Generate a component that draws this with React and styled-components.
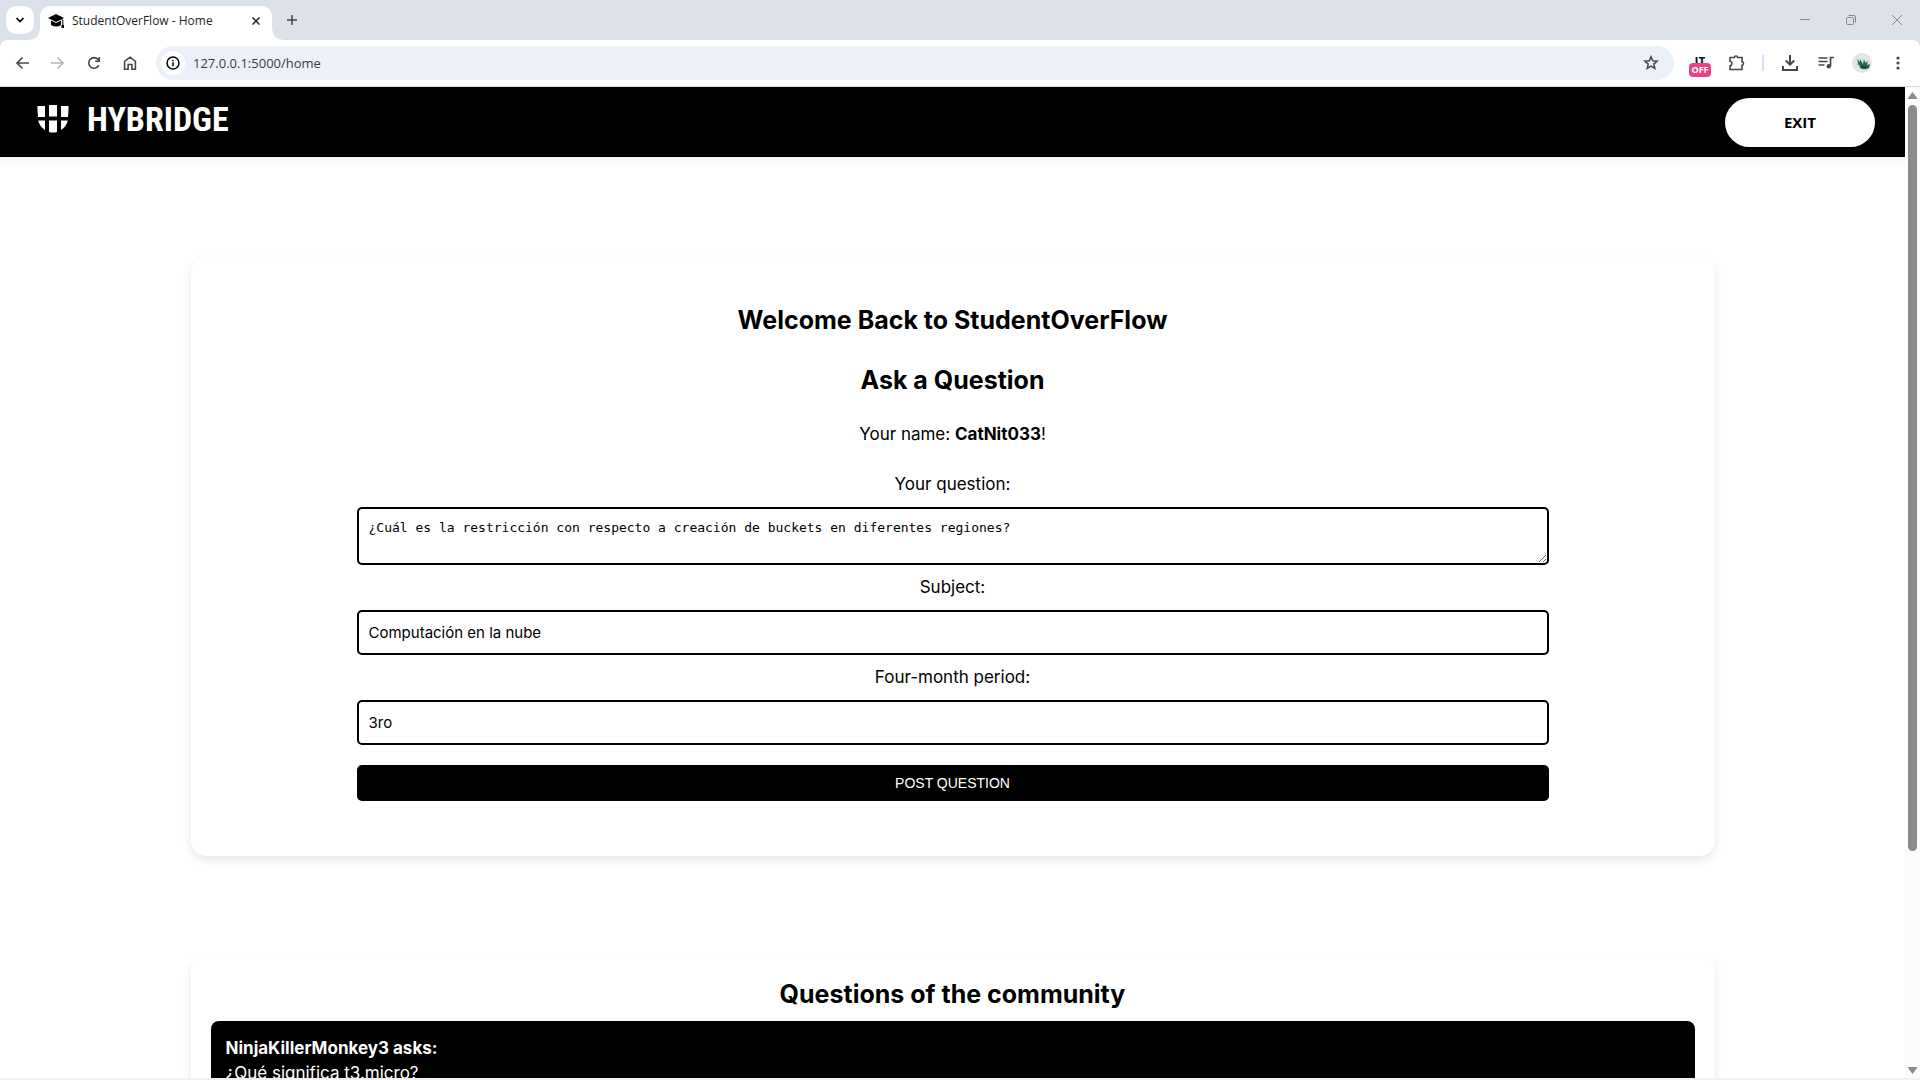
import React from "react";
import styled, { createGlobalStyle, css } from "styled-components";

const ui = `"Open Sans", "Noto Sans", sans-serif`;
const body = `Inter, "Noto Sans", sans-serif`;

const GlobalStyle = createGlobalStyle`
  *, *::before, *::after { box-sizing: border-box; }
  body { margin: 0; background: #fff; color: #000; font-family: ${body}; }
  h1, h2, p { margin: 0; }
  button, input, textarea { font-family: inherit; }
`;

const Browser = styled.div`
  display: flex;
  flex-direction: column;
  height: 100vh;
  overflow: hidden;
`;

const center = css`
  display: flex;
  align-items: center;
  justify-content: center;
`;

const TabStrip = styled.div`
  display: flex;
  align-items: flex-start;
  height: 40px;
  padding-left: 6px;
  background: #dde1e9;
  flex: none;
`;

const TabSearch = styled.button`
  ${center}
  width: 28px;
  height: 28px;
  margin: 6px 6px 0 0;
  padding: 0;
  border: 0;
  border-radius: 10px;
  background: #fff;
`;

const Tab = styled.div`
  position: relative;
  display: flex;
  align-items: center;
  gap: 8px;
  width: 232px;
  height: 34px;
  margin-top: 6px;
  padding: 0 8px 4px;
  border-radius: 10px 10px 0 0;
  background: #fff;
  font: 12px/16px ${ui};
  color: #1f1f1f;

  &::before, &::after {
    content: "";
    position: absolute;
    bottom: 0;
    width: 10px;
    height: 10px;
  }
  &::before {
    right: 100%;
    background: radial-gradient(circle at 0 0, transparent 9px, #fff 10px);
  }
  &::after {
    left: 100%;
    background: radial-gradient(circle at 100% 0, transparent 9px, #fff 10px);
  }
`;

const TabTitle = styled.span`
  flex: 1;
  white-space: nowrap;
`;

const IconButton = styled.button`
  ${center}
  flex: none;
  width: ${(p) => p.$w || 36}px;
  height: ${(p) => p.$h || 36}px;
  padding: 0;
  border: 0;
  background: none;
  color: ${(p) => p.$color || "#474747"};
`;

const NewTab = styled(IconButton)`
  margin: 6px auto 0 6px;
`;

const ToolbarBack = styled.div`
  flex: none;
  background: #dde1e9;
`;

const Toolbar = styled.div`
  display: flex;
  align-items: center;
  height: 47px;
  padding: 0 4px;
  border-bottom: 1px solid #dcdde0;
  border-radius: 8px 8px 0 0;
  background: #fff;
`;

const Address = styled.div`
  display: flex;
  align-items: center;
  flex: 1;
  height: 34px;
  margin: 0 8px;
  padding: 0 5px;
  border-radius: 17px;
  background: #ecf0f9;
`;

const SiteInfo = styled.button`
  ${center}
  width: 24px;
  height: 24px;
  margin-right: 8px;
  padding: 0;
  border: 0;
  border-radius: 50%;
  background: #fff;
`;

const AddressInput = styled.input`
  flex: 1;
  border: 0;
  padding: 0;
  outline: 0;
  background: none;
  color: #3a3c40;
  font: 13px/20px ${ui};
`;

const Divider = styled.span`
  width: 2px;
  height: 16px;
  margin: 0 8px;
  background: #d3e0f8;
`;

const Extension = styled.button`
  display: flex;
  flex-direction: column;
  align-items: center;
  justify-content: flex-end;
  width: 36px;
  height: 28px;
  padding: 0;
  border: 0;
  background: none;
  color: #111;
  font: bold 12px/14px ${ui};
`;

const ExtensionMark = styled.span`
  height: 8px;
  overflow: hidden;
  line-height: 14px;
`;

const Badge = styled.span`
  flex: none;
  width: 22px;
  height: 14px;
  border-radius: 4px;
  background: #e8438a;
  color: #fff;
  font: bold 9px/14px ${ui};
  text-align: center;
`;

const Viewport = styled.div`
  display: flex;
  flex: 1;
  min-height: 0;
  overflow: hidden;
  border-bottom: 2px solid #f1f1f1;
`;

const Page = styled.div`
  flex: 1;
  min-width: 0;
  overflow: hidden;
`;

const ScrollTrack = styled.div`
  display: flex;
  flex-direction: column;
  align-items: center;
  justify-content: space-between;
  width: 15px;
  padding: 5px 0 4px;
  background: #fcfcfc;
`;

const ScrollThumb = styled.div`
  width: 9px;
  height: 76%;
  margin: 6px 0 auto;
  border-radius: 5px;
  background: #8b8b8b;
`;

const Header = styled.header`
  display: flex;
  align-items: center;
  justify-content: space-between;
  height: 70px;
  padding: 0 30px 0 37px;
  background: #000;
  box-shadow: 0 4px 8px rgba(0, 0, 0, 0.05);
`;

const Logo = styled.a`
  display: flex;
  align-items: center;
  gap: 18px;
  padding-bottom: 6px;
  color: #fff;
  text-decoration: none;
  font: bold 34px/36px "Liberation Sans Narrow", "Roboto Condensed", "Liberation Sans", sans-serif;
`;

const ExitButton = styled.button`
  width: 150px;
  height: 49px;
  border: 0;
  border-radius: 25px;
  background: #fff;
  color: #000;
  font: 700 15px/24px "Open Sans", sans-serif;
`;

const Card = styled.section`
  width: 80%;
  margin: 100px auto 0;
  padding: ${(p) => p.$padding};
  border-radius: 15px;
  background: #fff;
  box-shadow: 0 4px 8px rgba(0, 0, 0, 0.1);
`;

const Title = styled.h2`
  font-size: 25px;
  line-height: 37px;
  font-weight: 700;
  text-align: center;
  margin-bottom: ${(p) => p.$gap}px;
`;

const Text = styled.p`
  font-size: 17px;
  line-height: 25px;
`;

const Greeting = styled(Text)`
  margin-bottom: 15px;
`;

const Form = styled.form`
  display: flex;
  flex-direction: column;
  text-align: center;
`;

const Label = styled.label`
  margin: 10px 0;
  font-size: 17px;
  line-height: 25px;
`;

const field = css`
  width: 100%;
  border: 2px solid #000;
  border-radius: 5px;
  padding: 10px;
  outline: 0;
  background: #fff;
  color: #000;
`;

const TextArea = styled.textarea`
  ${field}
  display: block;
  height: 58px;
  resize: vertical;
  font: 13px/18px "DejaVu Sans Mono", monospace;
`;

const TextInput = styled.input`
  ${field}
  height: 45px;
  font-size: 15px;
`;

const Submit = styled.button`
  height: 36px;
  margin-top: 20px;
  border: 0;
  border-radius: 5px;
  background: #000;
  color: #fff;
  font: 14px/20px "Liberation Sans", Arial, sans-serif;
`;

const Question = styled.article`
  padding: 15px;
  border-radius: 8px;
  background: #000;
  color: #fff;
`;

const Svg = ({ size = 20, children, sw = 2, ...rest }) => (
  <svg width={size} height={size} viewBox={`0 0 ${size} ${size}`} fill="none" stroke="currentColor" strokeWidth={sw} aria-hidden="true" {...rest}>
    {children}
  </svg>
);

const Shield = () => (
  <svg width="32" height="28" viewBox="0 0 32 28" fill="#fff" aria-hidden="true">
    <path d="M.5 1H8v11H1Q.3 6 .5 1ZM12 0h8v11.500h-8ZM24 1h7.500Q31.700 6 31 12h-7ZM1.200 15.500H8v9.500Q2.500 21.500 1.200 15.500ZM12 15.500h8V27q-4 1-8 0ZM24 15.500h6.800Q29.500 21.500 24 25Z" />
  </svg>
);

export default function App() {
  return (
    <>
      <GlobalStyle />
      <Browser>
        <TabStrip>
          <TabSearch aria-label="Search tabs">
            <Svg size={10} sw={1.7}><path d="M1.500 3 5 6.500 8.500 3" /></Svg>
          </TabSearch>
          <Tab>
            <svg width="16" height="16" viewBox="0 0 16 16" aria-hidden="true">
              <path d="M0 5 8 1l8 4-8 4ZM3 7.500 8 10l5-2.500V12q-5 3-10 0Z" />
              <path d="M8 5q6 0 6.800 2v6" fill="none" stroke="#000" />
              <path d="M13.500 12h2.500v3h-2.500z" />
            </svg>
            <TabTitle>StudentOverFlow - Home</TabTitle>
            <IconButton $w={16} $h={16} $color="#1f1f1f" aria-label="Close tab">
              <Svg size={8} sw={1.5}><path d="m.5.5 7 7m0-7-7 7" /></Svg>
            </IconButton>
          </Tab>
          <NewTab $w={28} $h={28} aria-label="New tab">
            <Svg size={10} sw={1.5}><path d="M5 0v10M0 5h10" /></Svg>
          </NewTab>
          <IconButton $w={46} $h={40} $color="#85888e" aria-label="Minimize">
            <Svg size={10} sw={1}><path d="M0 4.500h10" /></Svg>
          </IconButton>
          <IconButton $w={46} $h={40} $color="#85888e" aria-label="Restore">
            <Svg size={10} sw={1}><rect x=".5" y="2.500" width="7" height="7" rx="1" /><path d="M2.500.5H8q1.500 0 1.500 1.500v5.500" /></Svg>
          </IconButton>
          <IconButton $w={46} $h={40} $color="#85888e" aria-label="Close window">
            <Svg size={10} sw={1}><path d="m0 0 10 10m0-10L0 10" /></Svg>
          </IconButton>
        </TabStrip>

        <ToolbarBack>
          <Toolbar>
            <IconButton aria-label="Back">
              <Svg size={14} sw={1.6}><path d="M14 7H2m5.500-5.500L2 7l5.500 5.500" /></Svg>
            </IconButton>
            <IconButton $color="#b4b5b7" aria-label="Forward">
              <Svg size={14} sw={1.6}><path d="M0 7h12M6.500 1.500 12 7l-5.500 5.500" /></Svg>
            </IconButton>
            <IconButton aria-label="Reload">
              <Svg size={14} sw={1.6}><path d="M11.800 9.200A5.300 5.300 0 1 1 11 3.400l1.200 1.400M12.300 1v4.200H8.200" /></Svg>
            </IconButton>
            <IconButton aria-label="Home">
              <Svg size={14} sw={1.6}><path d="M1.600 13.200V5.300L7 1.200l5.400 4.100v7.900H8.900V8.500H5.100v4.700Z" /></Svg>
            </IconButton>
            <Address>
              <SiteInfo type="button" aria-label="Site information">
                <Svg size={14} sw={1.5}><circle cx="7" cy="7" r="6" /><path d="M7 6.200v4M7 3.700v1.500" /></Svg>
              </SiteInfo>
              <AddressInput aria-label="Address" defaultValue="127.0.0.1:5000/home" />
              <IconButton aria-label="Bookmark">
                <Svg size={16} sw={1.5}><path d="m8 1.800 1.700 4 4.400.4-3.300 2.900 1 4.300L8 11.100l-3.800 2.300 1-4.300-3.300-2.900 4.400-.4Z" /></Svg>
              </IconButton>
            </Address>
            <Extension>
              <ExtensionMark>JT</ExtensionMark>
              <Badge>OFF</Badge>
            </Extension>
            <IconButton aria-label="Extensions">
              <Svg size={18} sw={1.6}><path d="M3 3.500h4.300q.2-1.500 1.700-1.500t1.700 1.500H15v4.300q1.500.2 1.500 1.700T15 11.200v4.300H3v-3.700q2-.4 2-2.300T3 7.200Z" /></Svg>
            </IconButton>
            <Divider />
            <IconButton aria-label="Downloads">
              <Svg size={18}><path d="M9 1v9M4.800 6.500 9 10.700l4.200-4.200M2 12v4h14v-4" /></Svg>
            </IconButton>
            <IconButton aria-label="Media controls">
              <Svg size={16} sw={1.7}><path d="M.5 3h9M.5 6.500h9M.5 10h6M12.500 11V2.500H16" /><circle cx="10.800" cy="11.300" r="2.200" fill="currentColor" stroke="none" /></Svg>
            </IconButton>
            <IconButton aria-label="Profile">
              <svg width="20" height="20" viewBox="0 0 20 20" aria-hidden="true">
                <circle cx="10" cy="10" r="10" fill="#e3e5e4" />
                <path d="m5 6 3 3v-3l3 5 1-5 1.500 4L16 8l-1 4 3-1-1 4q-5 2.500-9 0l-1-3.500-1.500.5.5-2Z" fill="#236b50" />
                <path d="m9 12 4 2 3-2-2 3h-4Z" fill="#12432f" />
              </svg>
            </IconButton>
            <IconButton aria-label="Browser menu">
              <svg width="4" height="14" viewBox="0 0 4 14" fill="#474747" aria-hidden="true"><circle cx="2" cy="2" r="1.600" /><circle cx="2" cy="7" r="1.600" /><circle cx="2" cy="12" r="1.600" /></svg>
            </IconButton>
          </Toolbar>
        </ToolbarBack>

        <Viewport>
          <Page>
            <Header>
              <Logo href="#home"><Shield />HYBRIDGE</Logo>
              <ExitButton type="button">EXIT</ExitButton>
            </Header>
            <main>
              <Card $padding="45px 166px 55px">
                <Title $gap={23}>Welcome Back to StudentOverFlow</Title>
                <Title $gap={23}>Ask a Question</Title>
                <Form onSubmit={(e) => e.preventDefault()}>
                  <Greeting>Your name: <strong>CatNit033</strong>!</Greeting>
                  <Label htmlFor="question">Your question:</Label>
                  <TextArea id="question" rows="2" defaultValue="¿Cuál es la restricción con respecto a creación de buckets en diferentes regiones?" />
                  <Label htmlFor="subject">Subject:</Label>
                  <TextInput id="subject" defaultValue="Computación en la nube" />
                  <Label htmlFor="period">Four-month period:</Label>
                  <TextInput id="period" defaultValue="3ro" />
                  <Submit type="submit">POST QUESTION</Submit>
                </Form>
              </Card>
              <Card $padding="20px">
                <Title $gap={8}>Questions of the community</Title>
                <Question>
                  <Text><strong>NinjaKillerMonkey3 asks:</strong></Text>
                  <Text>¿Qué significa t3.micro?</Text>
                </Question>
              </Card>
            </main>
          </Page>
          <ScrollTrack aria-hidden="true">
            <svg width="9" height="7" viewBox="0 0 9 7" fill="#8b8b8b"><path d="M4.500 0 9 6v1H0V6Z" /></svg>
            <ScrollThumb />
            <svg width="9" height="7" viewBox="0 0 9 7" fill="#8b8b8b"><path d="M4.500 7 9 1V0H0v1Z" /></svg>
          </ScrollTrack>
        </Viewport>
      </Browser>
    </>
  );
}
